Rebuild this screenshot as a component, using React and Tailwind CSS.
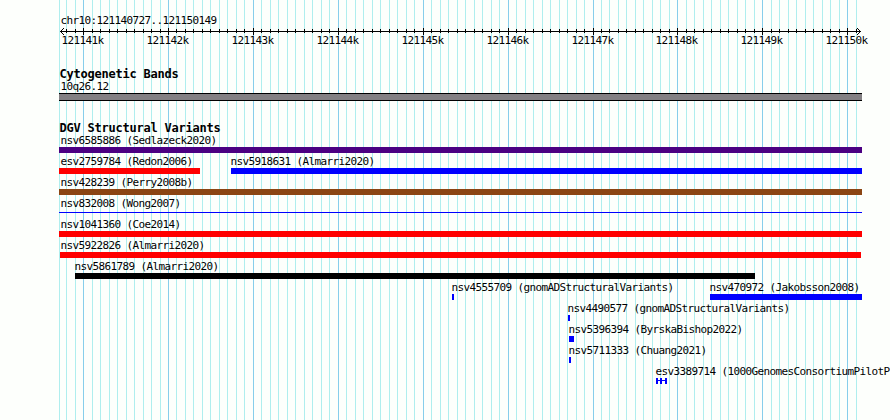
import clsx from 'clsx';

const MAJOR = [83, 168, 253, 338, 423, 508, 593, 677, 762, 847];

// minor lines every 100bp, major ones every 1kb
const lines = [{ x: 59, major: false }];
for (let i = -2; i <= 91; i++) {
    lines.push({ x: Math.round(83.1 + i * 8.49), major: i % 10 === 0 });
}

const tracks = [
    [{ label: 'nsv6585886 (Sedlazeck2020)', text: 60.5, start: 59, end: 862, color: 'bg-[#4b0082]' }],
    [
        { label: 'esv2759784 (Redon2006)', text: 60.5, start: 59, end: 200, color: 'bg-[#ff0000]' },
        { label: 'nsv5918631 (Almarri2020)', text: 230.5, start: 231, end: 862, color: 'bg-[#0000ff]' },
    ],
    [{ label: 'nsv428239 (Perry2008b)', text: 60.5, start: 59, end: 862, color: 'bg-[#8b4513]' }],
    [{ label: 'nsv832008 (Wong2007)', text: 60.5, start: 59, end: 862, color: 'bg-[#0000ff]', thin: true }],
    [{ label: 'nsv1041360 (Coe2014)', text: 60.5, start: 59, end: 862, color: 'bg-[#ff0000]' }],
    [{ label: 'nsv5922826 (Almarri2020)', text: 60.5, start: 60, end: 861, color: 'bg-[#ff0000]' }],
    [{ label: 'nsv5861789 (Almarri2020)', text: 74.5, start: 75, end: 755, color: 'bg-black' }],
    [
        { label: 'nsv4555709 (gnomADStructuralVariants)', text: 451.5, start: 452, end: 454, color: 'bg-[#0000ff]' },
        { label: 'nsv470972 (Jakobsson2008)', text: 709.5, start: 710, end: 862, color: 'bg-[#0000ff]' },
    ],
    [{ label: 'nsv4490577 (gnomADStructuralVariants)', text: 567.5, start: 568, end: 570, color: 'bg-[#0000ff]' }],
    [{ label: 'nsv5396394 (ByrskaBishop2022)', text: 568.5, start: 569, end: 574, color: 'bg-[#0000ff]' }],
    [{ label: 'nsv5711333 (Chuang2021)', text: 568.5, start: 569, end: 571, color: 'bg-[#0000ff]' }],
    [{ label: 'esv3389714 (1000GenomesConsortiumPilotP', text: 655.5, start: 656, end: 667, split: true }],
];

function Grid() {
    return (
        <svg className="absolute inset-0" width="890" height="420" shapeRendering="crispEdges">
            {lines.map((l) => (
                <rect key={l.x} x={l.x} y="0" width="1" height="420" fill={l.major ? '#87ceeb' : '#afeeee'} />
            ))}
        </svg>
    );
}

function Ruler() {
    return (
        <svg className="block" width="890" height="9" shapeRendering="crispEdges">
            <rect x="60" y="4" width="801" height="1" />
            {lines.slice(1).map((l) => (
                <rect key={l.x} x={l.x} y={l.major ? 1 : 2} width="1" height={l.major ? 7 : 4} />
            ))}
            <path d="M63 1h1v1h-1zM62 2h1v1h-1zM61 3h1v1h-1zM61 5h1v1h-1zM62 6h1v1h-1zM63 7h1v1h-1z" />
            <path d="M857 1h1v1h-1zM858 2h1v1h-1zM859 3h1v1h-1zM859 5h1v1h-1zM858 6h1v1h-1zM857 7h1v1h-1z" />
        </svg>
    );
}

function Bar({ item, gap }) {
    const style = { marginLeft: gap, width: item.end - item.start };
    if (item.split) {
        return (
            <svg className="block h-1.5 shrink-0" style={style} fill="#0000ff" shapeRendering="crispEdges">
                <rect x="0" y="0" width="2" height="6" />
                <rect x="4" y="0" width="2" height="6" />
                <rect x="9" y="0" width="2" height="6" />
                <rect x="0" y="2" width="11" height="1" />
            </svg>
        );
    }
    return <div className={clsx('shrink-0', item.color, item.thin ? 'h-px mt-0.5' : 'h-1.5')} style={style} />;
}

function Track({ items }) {
    return (
        <div className="h-[21px]">
            <div className="flex h-[13px]">
                {items.map((item, i) => {
                    const prev = items[i - 1];
                    const gap = prev ? item.text - prev.text : item.text;
                    // zero-width cells, the labels run past their own feature
                    return (
                        <span key={item.label} className="w-0 shrink-0 whitespace-pre" style={{ marginLeft: gap }}>
                            {item.label}
                        </span>
                    );
                })}
            </div>
            <div className="flex h-2 items-start">
                {items.map((item, i) => (
                    <Bar key={item.label} item={item} gap={i ? item.start - items[i - 1].end : item.start} />
                ))}
            </div>
        </div>
    );
}

function Heading({ children }) {
    return (
        <h2 className="h-[13px] pl-[59.5px] text-[12px] font-bold leading-[13px] tracking-[-0.224px]">{children}</h2>
    );
}

export default function App() {
    return (
        <div className="relative h-[420px] w-[890px] overflow-hidden bg-[#fdfffc] font-['DejaVu_Sans_Mono',monospace] text-[11px] leading-[13px] tracking-[-0.622px] text-black">
            <Grid />
            <div className="relative pt-[14px]">
                <div className="h-[13px] pl-[60.5px]">chr10:121140727..121150149</div>
                <Ruler />
                <div className="-mt-0.5 flex h-[13px] pl-[61.5px]">
                    {MAJOR.map((x, i) => (
                        <span
                            key={x}
                            className="shrink-0 whitespace-pre"
                            style={{ width: (MAJOR[i + 1] ?? x + 43) - x }}
                        >
                            {121141 + i}k
                        </span>
                    ))}
                </div>

                <section className="pt-[21px]">
                    <Heading>Cytogenetic Bands</Heading>
                    <div className="-mt-px h-[13px] pl-[60.5px]">10q26.12</div>
                    <div className="ml-[59px] h-2 w-[803px] border-y border-black bg-[#838083]" />
                </section>

                <section className="pt-[21px]">
                    <Heading>DGV Structural Variants</Heading>
                    <div className="-mt-px">
                        {tracks.map((items) => (
                            <Track key={items[0].label} items={items} />
                        ))}
                    </div>
                </section>
            </div>
        </div>
    );
}
